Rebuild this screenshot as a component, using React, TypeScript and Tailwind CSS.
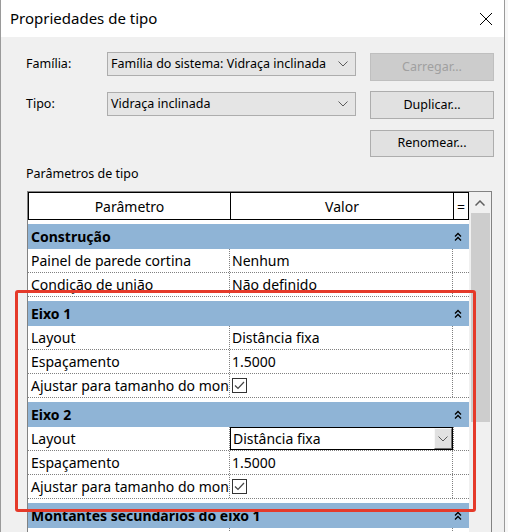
import React from "react";

const Chevron = ({ className = "" }: { className?: string }) => (
  <svg width="10" height="6" viewBox="0 0 10 6" className={className}>
    <polyline points="0.5,0.5 5,5 9.5,0.5" fill="none" stroke="#5a5a5a" strokeWidth="1" />
  </svg>
);

const Collapse = () => (
  <svg width="8" height="10" viewBox="0 0 8 10">
    <polyline points="1,4.5 4,1.5 7,4.5" fill="none" stroke="#000" strokeWidth="1.3" />
    <polyline points="1,8.5 4,5.5 7,8.5" fill="none" stroke="#000" strokeWidth="1.3" />
  </svg>
);

const Check = () => (
  <div className="w-[15px] h-[15px] border border-[#333] bg-white flex items-center justify-center">
    <svg width="11" height="9" viewBox="0 0 11 9">
      <polyline points="1,4.5 4,7.5 10,1" fill="none" stroke="#444" strokeWidth="1.2" />
    </svg>
  </div>
);

const Band = ({ label }: { label: string }) => (
  <div className="pt-[4px] bg-white">
    <div className="h-[25px] bg-[#8fb4d6] flex items-center justify-between pl-[3px] pr-[7px]">
      <span className="font-bold text-[14px] text-black whitespace-nowrap">{label}</span>
      <Collapse />
    </div>
  </div>
);

const Row = ({ name, value }: { name: string; value: React.ReactNode }) => (
  <div className="h-[24px] flex bg-white border-b border-dotted border-[#808080] text-[14px] text-black">
    <div className="w-[202px] pl-[3px] flex items-center overflow-hidden whitespace-nowrap border-r border-dotted border-[#808080]">
      {name}
    </div>
    <div className="w-[223px] pl-[2px] flex items-center border-r border-dotted border-[#808080]">{value}</div>
    <div className="flex-1" />
  </div>
);

const EditRow = () => (
  <div className="h-[24px] flex bg-white border-b border-dotted border-[#808080] text-[14px] text-black">
    <div className="w-[202px] pl-[3px] flex items-center whitespace-nowrap border-r border-dotted border-[#808080]">
      Layout
    </div>
    <div className="w-[223px] h-[23px] border border-black flex items-center">
      <span className="flex-1 pl-[2px]">Distância fixa</span>
      <div className="w-[18px] h-[21px] bg-[#e1e1e1] border-l border-l-[#f8f8f8] border-r border-b border-r-[#707070] border-b-[#707070] border-t border-t-[#f8f8f8] flex items-center justify-center">
        <Chevron />
      </div>
    </div>
    <div className="flex-1 border-l border-dotted border-[#808080]" />
  </div>
);

export default function App() {
  return (
    <div className="relative w-[508px] h-[532px] overflow-hidden bg-[#f7f7f7] font-['Noto_Sans',sans-serif] text-[#000]">
      <div className="w-[505px] h-[532px] bg-[#f0f0f0] border-l border-r border-[#9a9a9a]">
        {/* title bar */}
        <div className="h-[37px] bg-white flex items-center justify-between pl-[9px] pr-[11px]">
          <span className="text-[15px] text-black">Propriedades de tipo</span>
          <svg width="14" height="14" viewBox="0 0 14 14">
            <line x1="1" y1="1" x2="13" y2="13" stroke="#000" strokeWidth="1" />
            <line x1="13" y1="1" x2="1" y2="13" stroke="#000" strokeWidth="1" />
          </svg>
        </div>

        <div className="pl-[25px] pt-[15px] text-[12.5px]">
          {/* row 1 */}
          <div className="flex items-start h-[29px]">
            <div className="w-[81px] h-[24px] flex items-center">Família:</div>
            <div className="w-[249px] h-[24px] bg-[#e5e5e5] border border-[#adadad] flex items-center justify-between pl-[3px] pr-[7px]">
              <span>Família do sistema: Vidraça inclinada</span>
              <Chevron />
            </div>
            <div className="ml-[14px] mt-[1px] w-[124px] h-[28px] bg-[#cccccc] border border-[#bfbfbf] text-[#a0a0a0] flex items-center justify-center">
              Carregar...
            </div>
          </div>
          {/* row 2 */}
          <div className="flex items-start h-[28px] mt-[10px]">
            <div className="w-[81px] h-[24px] mt-[1px] flex items-center">Tipo:</div>
            <div className="w-[249px] h-[24px] mt-[1px] bg-[#e5e5e5] border border-[#adadad] flex items-center justify-between pl-[3px] pr-[7px]">
              <span>Vidraça inclinada</span>
              <Chevron />
            </div>
            <div className="ml-[14px] w-[124px] h-[28px] bg-[#e1e1e1] border border-[#adadad] flex items-center justify-center">
              Duplicar...
            </div>
          </div>
          {/* row 3 */}
          <div className="flex h-[27px] mt-[11px]">
            <div className="ml-[344px] w-[124px] h-[27px] bg-[#e1e1e1] border border-[#adadad] flex items-center justify-center">
              Renomear...
            </div>
          </div>
          <div className="mt-[9px] h-[16px] flex items-center">Parâmetros de tipo</div>
        </div>

        {/* table */}
        <div className="ml-[26px] mt-[9px] w-[465px] h-[400px] border border-[#828282] flex">
          <div className="w-[441px] flex flex-col bg-white">
            <div className="h-[28px] flex text-[14px] bg-white">
              <div className="w-[203px] border border-black flex items-center justify-center">Parâmetro</div>
              <div className="w-[223px] border-y border-r border-black flex items-center justify-center">Valor</div>
              <div className="w-[15px] border-y border-r border-black flex items-center justify-center">=</div>
            </div>
            <Band label="Construção" />
            <Row name="Painel de parede cortina" value="Nenhum" />
            <Row name="Condição de união" value="Não definido" />
            <Band label="Eixo 1" />
            <Row name="Layout" value="Distância fixa" />
            <Row name="Espaçamento" value="1.5000" />
            <Row name="Ajustar para tamanho do montante" value={<Check />} />
            <Band label="Eixo 2" />
            <EditRow />
            <Row name="Espaçamento" value="1.5000" />
            <Row name="Ajustar para tamanho do montante" value={<Check />} />
            <Band label="Montantes secundários do eixo 1" />
            <Row name="" value="" />
          </div>
          <div className="w-[22px] bg-[#f0f0f0] flex flex-col items-start">
            <div className="h-[21px] w-full flex items-center justify-center">
              <svg width="10" height="6" viewBox="0 0 10 6">
                <polyline points="0.5,5.5 5,1 9.5,5.5" fill="none" stroke="#606060" strokeWidth="1.5" />
              </svg>
            </div>
            <div className="ml-[2px] w-[19px] h-[209px] bg-[#cdcdcd]" />
          </div>
        </div>
      </div>

      {/* red highlight */}
      <div className="absolute left-[15px] top-[290px] w-[461px] h-[222px] border-[3px] border-[#e53a2a] rounded-[3px] pointer-events-none" />
    </div>
  );
}
